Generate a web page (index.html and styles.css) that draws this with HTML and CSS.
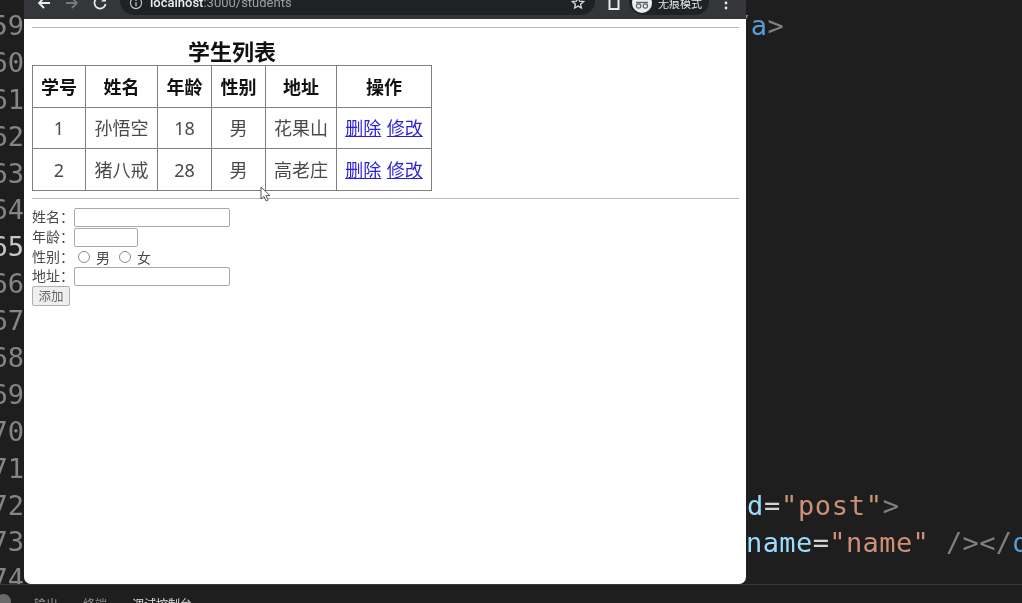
FILE: index.html
```html
<!DOCTYPE html>
<html lang="zh">
<head>
<meta charset="utf-8">
<title>学生列表</title>
<link rel="stylesheet" href="styles.css">
</head>
<body>
<div class="workbench">
  <section class="editor">
    <div class="gutter">
      <div class="num">59</div><div class="num">60</div><div class="num">61</div><div class="num">62</div>
      <div class="num">63</div><div class="num">64</div><div class="num active">65</div><div class="num">66</div>
      <div class="num">67</div><div class="num">68</div><div class="num">69</div><div class="num">70</div>
      <div class="num">71</div><div class="num">72</div><div class="num">73</div><div class="num">74</div>
    </div>
    <div class="code">
      <div class="line first"><span class="punc">/</span><span class="tag">a</span><span class="punc">&gt;</span></div>
      <div class="spacer"></div>
      <div class="line second"><span class="attr">d</span><span class="eq">=</span><span class="str">"post"</span><span class="punc">&gt;</span></div>
      <div class="line third"><span class="attr">name</span><span class="eq">=</span><span class="str">"name"</span> <span class="punc">/&gt;&lt;/</span><span class="tag">div</span></div>
    </div>
  </section>
  <footer class="panel">
    <span class="badge"></span>
    <span class="tab">输出</span>
    <span class="tab">终端</span>
    <span class="tab current">调试控制台</span>
  </footer>
</div>

<div class="window">
  <header class="toolbar">
    <div class="nav">
      <svg class="ic" viewBox="0 0 16 16"><path d="M14 8H3M8 3L3 8l5 5" fill="none" stroke="#e8eaed" stroke-width="1.8"/></svg>
      <svg class="ic" viewBox="0 0 16 16"><path d="M2 8h11M8 3l5 5-5 5" fill="none" stroke="#75777a" stroke-width="1.8"/></svg>
      <svg class="ic" viewBox="0 0 16 16"><path d="M13 5.2A5.6 5.6 0 1 0 13.6 9" fill="none" stroke="#e8eaed" stroke-width="1.7"/><path d="M14 1.5v5H9z" fill="#e8eaed"/></svg>
    </div>
    <div class="omnibox">
      <svg class="info" viewBox="0 0 14 14"><circle cx="7" cy="7" r="5.6" fill="none" stroke="#bdc1c6" stroke-width="1.2"/><path d="M7 6.2v4M7 3.8v1.2" stroke="#bdc1c6" stroke-width="1.3"/></svg>
      <span class="url"><b>localhost</b>:3000/students</span>
      <svg class="star" viewBox="0 0 14 14"><path d="M7 1.6l1.6 3.6 3.9.4-2.9 2.6.8 3.8L7 10.1l-3.4 1.9.8-3.8L1.5 5.6l3.9-.4z" fill="none" stroke="#d5d7da" stroke-width="1.3"/></svg>
    </div>
    <svg class="reader" viewBox="0 0 14 14"><path d="M2.5 0h9v13h-9z" fill="none" stroke="#e8eaed" stroke-width="2"/></svg>
    <div class="incognito">
      <svg class="avatar" viewBox="0 0 20 20"><circle cx="10" cy="10" r="10" fill="#eceded"/><path d="M4 9.5h12" stroke="#5f6368" stroke-width="1.3"/><circle cx="6.6" cy="13" r="2.2" fill="none" stroke="#5f6368" stroke-width="1.2"/><circle cx="13.4" cy="13" r="2.2" fill="none" stroke="#5f6368" stroke-width="1.2"/></svg>
      <span>无痕模式</span>
    </div>
    <svg class="kebab" viewBox="0 0 4 16"><circle cx="2" cy="3" r="1.4" fill="#e8eaed"/><circle cx="2" cy="8" r="1.4" fill="#e8eaed"/><circle cx="2" cy="13" r="1.4" fill="#e8eaed"/></svg>
  </header>

  <main class="page">
    <hr class="rule top">
    <table class="students">
      <caption>学生列表</caption>
      <thead>
        <tr><th class="c1">学号</th><th class="c2">姓名</th><th class="c3">年龄</th><th class="c4">性别</th><th class="c5">地址</th><th class="c6">操作</th></tr>
      </thead>
      <tbody>
        <tr class="r1"><td>1</td><td>孙悟空</td><td>18</td><td>男</td><td>花果山</td><td><a href="#">删除</a> <a href="#">修改</a></td></tr>
        <tr class="r2"><td>2</td><td>猪八戒</td><td>28</td><td>男</td><td>高老庄</td><td><a href="#">删除</a> <a href="#">修改</a></td></tr>
      </tbody>
    </table>
    <hr class="rule mid">
    <form class="form">
      <div class="row"><label>姓名：</label><input class="text long" type="text"></div>
      <div class="row"><label>年龄：</label><input class="text short" type="text"></div>
      <div class="row radios"><label>性别：</label><span class="radio"></span><span class="opt">男</span><span class="radio"></span><span class="opt">女</span></div>
      <div class="row"><label>地址：</label><input class="text long" type="text"></div>
      <button class="add" type="button">添加</button>
    </form>
  </main>

  <svg class="cursor" viewBox="0 0 12 16"><path d="M1 1v12l3-2.6L6.2 15l2-1L6 9.6h4z" fill="#fff" stroke="#555" stroke-width="1"/></svg>
</div>
</body>
</html>
```

FILE: styles.css
```css
* { box-sizing: border-box; }
html, body {
  margin: 0;
  height: 603px;
  overflow: hidden;
  background: #1e1e1e;
}
body { filter: blur(0.35px); }

.workbench {
  display: flex;
  flex-direction: column;
  height: 603px;
}

/* editor behind the window */
.editor {
  display: flex;
  height: 584px;
  padding-top: 8px;
  overflow: hidden;
  font: 27px/36.9px "DejaVu Sans Mono", monospace;
  background: #1e1e1e;
}
.gutter { flex: 0 0 24px; width: 24px; }
.num {
  display: flex;
  justify-content: flex-end;
  height: 36.9px;
  color: #858585;
}
.num.active { color: #c6c6c6; }
.code {
  flex: 1;
  display: flex;
  flex-direction: column;
  white-space: pre;
}
.line { height: 36.9px; }
.first { padding-left: 710px; letter-spacing: 0.5px; }
.spacer { height: 442.8px; }
.second { padding-left: 723px; letter-spacing: 0.7px; }
.third { padding-left: 722px; letter-spacing: 0.4px; }
.tag { color: #569cd6; }
.punc { color: #808080; }
.attr { color: #9cdcfe; }
.eq { color: #d4d4d4; }
.str { color: #ce9178; }

/* bottom panel */
.panel {
  flex: 1;
  display: flex;
  align-items: flex-start;
  gap: 25px;
  position: relative;
  padding: 11px 0 0 34px;
  border-top: 1px solid #3a3a3a;
  background: #1e1e1e;
  font: 12px/16px "Noto Sans CJK SC", sans-serif;
  color: #8f8f8f;
  overflow: hidden;
}
.tab.current { color: #e0e0e0; }
.badge {
  position: absolute;
  left: -4px;
  top: 9px;
  width: 15px;
  height: 15px;
  border-radius: 50%;
  background: #6a6a6a;
}

/* browser window */
.window {
  position: absolute;
  left: 24px;
  top: -13px;
  width: 722px;
  height: 597px;
  display: flex;
  flex-direction: column;
  background: #fff;
  border-radius: 0 0 7px 7px;
  overflow: hidden;
}
.toolbar {
  flex: 0 0 32px;
  display: flex;
  align-items: flex-start;
  background: #35363a;
  color: #e8eaed;
}
.nav {
  display: flex;
  gap: 12px;
  padding: 8px 0 0 12px;
  flex: 0 0 96px;
}
.ic { width: 16px; height: 16px; }
.omnibox {
  display: flex;
  align-items: center;
  flex: 0 0 475px;
  height: 28px;
  padding: 4px 10px 0 9px;
  border-radius: 14px;
  background: #202124;
}
.info { width: 14px; height: 14px; margin-right: 7px; }
.url {
  flex: 1;
  font: 13px/16px Roboto, "Liberation Sans", sans-serif;
  color: #9aa0a6;
}
.url b { font-weight: 500; color: #eceef0; }
.star { width: 14px; height: 14px; margin-top: 0; }
.reader { width: 14px; height: 14px; margin: 9px 0 0 12px; }
.incognito {
  display: flex;
  align-items: center;
  gap: 6px;
  flex: 0 0 80px;
  height: 28px;
  margin-left: 8px;
  padding: 4px 0 0 3px;
  border-radius: 14px;
  background: #202124;
  font: 11px/14px "Noto Sans CJK SC", sans-serif;
}
.avatar { width: 20px; height: 20px; flex: none; }
.kebab { width: 4px; height: 16px; margin: 8px 0 0 15px; }

/* page */
.page {
  flex: 1;
  padding: 8px 7px 0 8px;
  font-family: "Noto Sans CJK SC", sans-serif;
  color: #333;
}
.rule {
  display: block;
  height: 1px;
  margin: 0;
  border: 0;
  background: #b9b9bd;
}
.rule.mid { margin-top: 7px; }
.students {
  border-collapse: collapse;
  width: 399px;
  table-layout: fixed;
  margin-top: 9px;
  font-size: 18px;
  line-height: 24px;
  text-align: center;
}
.students caption {
  position: relative;
  top: -1px;
  height: 28px;
  font-size: 22px;
  font-weight: 700;
  line-height: 28px;
  color: #111;
}
.students th, .students td {
  padding: 0;
  border: 1px solid #808080;
}
.students th { height: 42px; padding-bottom: 2px; font-weight: 700; color: #111; }
.r1 td { height: 41px; }
.r2 td { height: 42px; }
.c1 { width: 53px; }
.c2 { width: 72px; }
.c3, .c4 { width: 54px; }
.c5 { width: 71px; }
.c6 { width: 95px; }
.students td { color: #4a4a4a; font-family: "Noto Sans", "Noto Sans CJK SC", sans-serif; font-weight: 400; }
.students a { color: #2a1fd8; }
.students a + a { margin-left: 1px; }

.form {
  margin-top: 8px;
  font-size: 14px;
  line-height: 20px;
  color: #4a4a4a;
}
.row {
  display: flex;
  align-items: center;
  height: 20px;
}
.row.radios { height: 19px; }
.row label { flex: 0 0 42px; position: relative; top: -1px; }
.text {
  height: 19px;
  padding: 0;
  border: 1px solid #a9a9a9;
  border-radius: 2px;
  background: #fff;
}
.long { width: 156px; }
.short { width: 64px; }
.radio {
  width: 12px;
  height: 12px;
  margin: 0 6px 0 4px;
  border: 1px solid #8a8a8a;
  border-radius: 50%;
}
.opt { margin-right: 5px; }
.add {
  display: block;
  width: 38px;
  height: 20px;
  padding: 0;
  border: 1px solid #b0b0b0;
  border-radius: 2px;
  background: #efefef;
  font: 12.5px/16px "Noto Sans CJK SC", sans-serif;
  color: #666;
}
.cursor {
  position: absolute;
  left: 236px;
  top: 199px;
  width: 12px;
  height: 16px;
}
```
